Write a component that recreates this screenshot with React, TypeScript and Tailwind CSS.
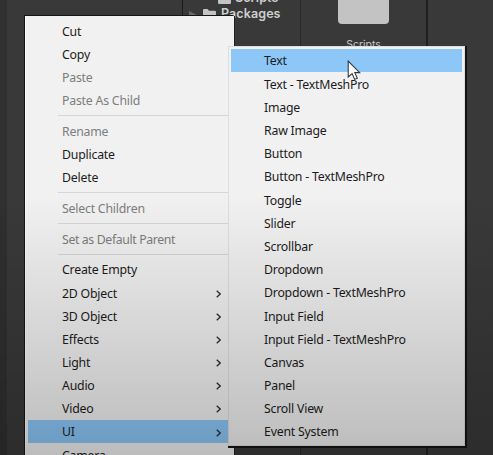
import React from "react";

type Entry = { label: string; off?: boolean; sub?: boolean; active?: boolean; tight?: boolean } | null;

const contextMenu: Entry[] = [
  { label: "Cut" },
  { label: "Copy" },
  { label: "Paste", off: true },
  { label: "Paste As Child", off: true },
  null,
  { label: "Rename", off: true },
  { label: "Duplicate" },
  { label: "Delete" },
  null,
  { label: "Select Children", off: true },
  null,
  { label: "Set as Default Parent", off: true, tight: true },
  null,
  { label: "Create Empty" },
  { label: "2D Object", sub: true },
  { label: "3D Object", sub: true },
  { label: "Effects", sub: true },
  { label: "Light", sub: true },
  { label: "Audio", sub: true },
  { label: "Video", sub: true },
  { label: "UI", sub: true, active: true },
  { label: "Camera" },
];

const uiMenu: string[] = [
  "Text",
  "Text - TextMeshPro",
  "Image",
  "Raw Image",
  "Button",
  "Button - TextMeshPro",
  "Toggle",
  "Slider",
  "Scrollbar",
  "Dropdown",
  "Dropdown - TextMeshPro",
  "Input Field",
  "Input Field - TextMeshPro",
  "Canvas",
  "Panel",
  "Scroll View",
  "Event System",
];

function Folder({ className }: { className: string }) {
  return (
    <svg viewBox="0 0 13 11" className={className} fill="#c4c4c4">
      <path d="M0 1.2Q0 0 1.2 0H4.6L6 1.8H11.8Q13 1.8 13 3V9.8Q13 11 11.8 11H1.2Q0 11 0 9.8Z" />
    </svg>
  );
}

function Row({ entry }: { entry: Entry }) {
  if (!entry) {
    return (
      <div className="flex h-[7.6px] shrink-0 items-center pl-[30px]">
        <div className="h-px w-full bg-[#d6d6d6]" />
      </div>
    );
  }
  return (
    <div
      className={`flex h-[23.15px] shrink-0 items-center justify-between pt-[2px] pr-[7px] pl-[34px] ${entry.active ? "bg-[#8cc7f8]" : ""} ${entry.off ? "text-[#7d7d7d]" : "text-[#1c1c1c]"}`}
    >
      <span className={entry.tight ? "tracking-[-0.37px]" : ""}>{entry.label}</span>
      {entry.sub && (
        <svg viewBox="0 0 5 8" className="h-2 w-[5px]" fill="none" stroke="#303030" strokeWidth="1.3">
          <path d="M.7.7L4.2 4L.7 7.3" />
        </svg>
      )}
    </div>
  );
}

export default function App() {
  return (
    <div className="relative h-[455px] w-[493px] overflow-hidden bg-[#393939] font-['Noto_Sans','Open_Sans',sans-serif] text-[12.3px] leading-none tracking-[-0.21px] whitespace-nowrap">
      <div className="flex h-full">
        <div className="w-[7px] bg-[#303030]" />
        <div className="w-[176px] border-r border-[#1c1c1c]" />
        <div className="w-[118px] overflow-hidden border-r border-[#292929] font-['Inter',sans-serif] text-[12.5px] font-semibold tracking-[0.1px] text-[#cfcfcf]">
          <div className="-mt-[9px] flex h-[15px] items-center pl-[35px]">
            <Folder className="h-[11px] w-[13px]" />
            <span className="ml-[4px]">Scripts</span>
          </div>
          <div className="flex h-[17px] items-center pl-[6px]">
            <svg viewBox="0 0 8 8" className="h-2 w-2" fill="#686868">
              <path d="M0 0L8 4L0 8Z" />
            </svg>
            <Folder className="ml-[6px] h-[11px] w-[13px]" />
            <span className="ml-[5px]">Packages</span>
          </div>
        </div>
        <div className="flex w-[127px] flex-col items-center border-r-2 border-[#202020]">
          <div className="h-6 w-[51px] rounded-b-[4px] bg-[#c3c3c3]" />
          <span className="mt-4 font-['Inter',sans-serif] text-[10.5px] tracking-normal text-[#c4c4c4]">Scripts</span>
        </div>
      </div>

      <div className="absolute top-4 left-[25px] flex h-[460px] w-[209px] flex-col border-l border-[#fafafa] bg-[#f1f1f1] pt-[3.4px] pr-[6px] pl-[2px] shadow-[-1px_-1px_0_#151515,1px_0_0_#202020]">
        {contextMenu.map((entry, i) => (
          <Row key={i} entry={entry} />
        ))}
      </div>

      <div className="absolute top-[46px] left-[228px] h-[400px] w-[237px] border border-[#dedede] bg-[#f1f1f1] px-[2px] pt-[2px] shadow-[1px_1px_0_1px_#141414]">
        {uiMenu.map((label, i) => (
          <div
            key={label}
            className={`flex h-[23.2px] items-center pt-[2px] pl-[33px] text-[#1c1c1c] ${i === 0 ? "bg-[#8cc7f8]" : ""}`}
          >
            {label}
          </div>
        ))}
      </div>

      <svg viewBox="0 0 14 20" className="absolute top-[60px] left-[347px] h-[21px] w-[15px]" fill="#fafafa" stroke="#30343c" strokeWidth="1">
        <path d="M1 1V16.2L4.7 12.9L7.1 18.5L9.7 17.4L7.3 12H12Z" />
      </svg>

      <div className="pointer-events-none absolute inset-x-0 top-[195px] bottom-0 bg-linear-to-b from-black/0 to-black/22" />
    </div>
  );
}
